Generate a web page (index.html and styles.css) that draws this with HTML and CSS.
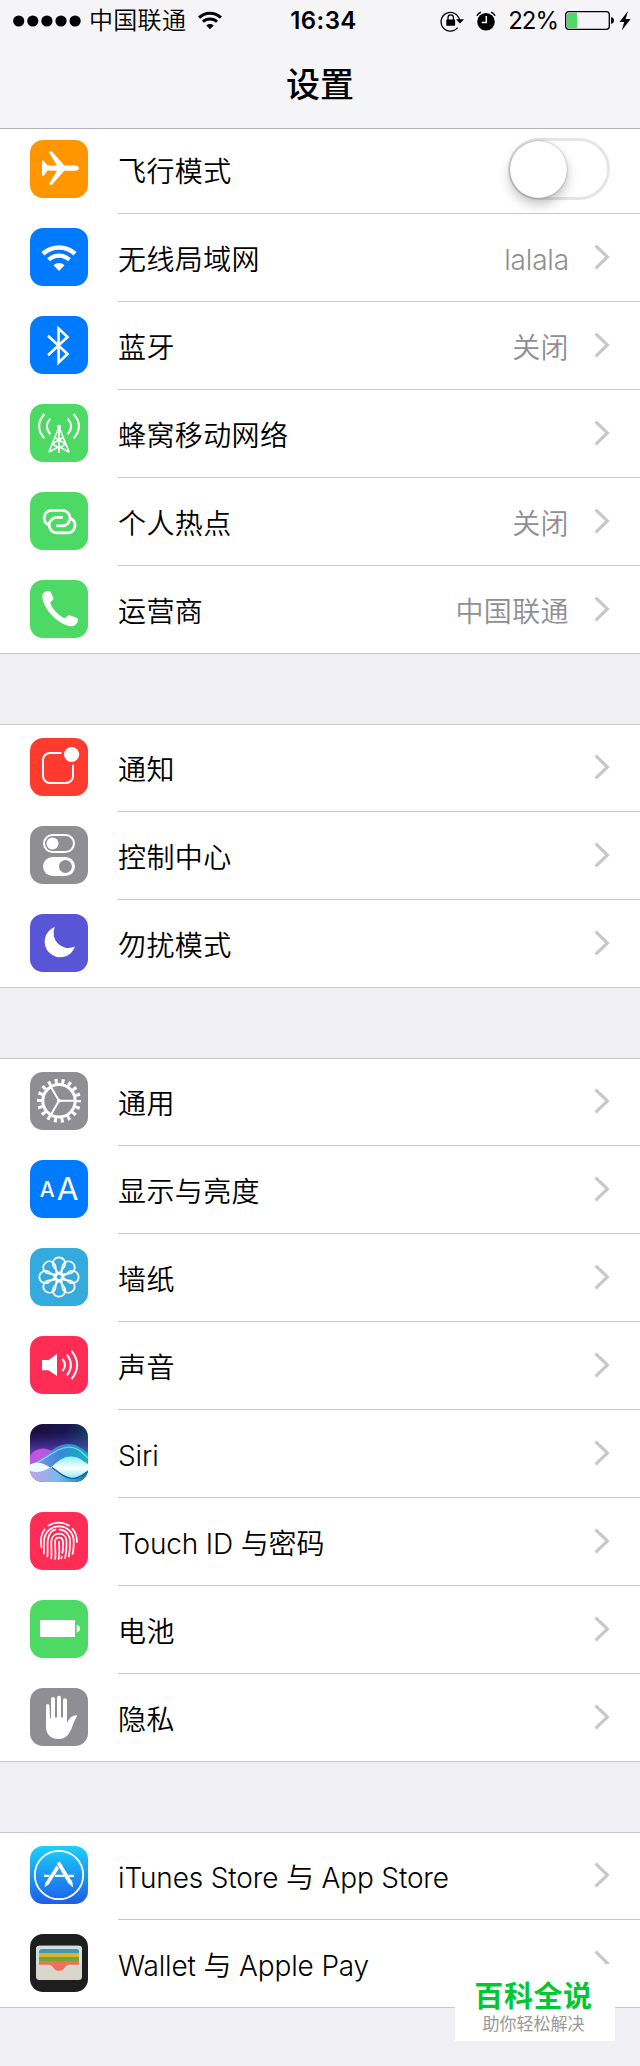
FILE: index.html
```
<!DOCTYPE html>
<html lang="zh-CN">
<head>
    <meta charset="UTF-8">
    <meta name="viewport" content="width=device-width, initial-scale=1.0">
    <title>设置</title>
    <link rel="stylesheet" href="styles.css">
</head>
<body>
    <!-- Formes réutilisées -->
    <svg class="defs" width="0" height="0">
        <symbol id="chevron" viewBox="0 0 16 26">
            <path d="M1.6 1.6 L13.4 13 L1.6 24.4" fill="none" stroke="#c7c7cc" stroke-width="3.2"/>
        </symbol>
        <symbol id="wifi" viewBox="10 16 38 28">
            <g fill="none" stroke="currentColor">
                <path d="M12.9 25.75 A23.6 23.6 0 0 1 45.1 25.75" stroke-width="4.5"/>
                <path d="M18.6 31.8 A15.3 15.3 0 0 1 39.4 31.8" stroke-width="4.2"/>
            </g>
            <path d="M29 43 L23.5 37.2 A8 8 0 0 1 34.5 37.2 Z" fill="currentColor"/>
        </symbol>
    </svg>

    <!-- En-tête -->
    <header class="header">
        <div class="status-bar">
            <div class="status-left">
                <svg class="signal" viewBox="0 0 68 12">
                    <circle cx="5.7" cy="6" r="5.6"/><circle cx="19.8" cy="6" r="5.6"/><circle cx="33.9" cy="6" r="5.6"/><circle cx="48" cy="6" r="5.6"/><circle cx="62.1" cy="6" r="5.6"/>
                </svg>
                <span class="carrier">中国联通</span>
                <svg class="status-wifi"><use href="#wifi"/></svg>
            </div>
            <span class="time">16:34</span>
            <div class="status-right">
                <svg class="lock" viewBox="0 0 24 22">
                    <path d="M17.6 17.6 A9.3 9.3 0 1 1 19.6 10.5" fill="none" stroke="#000" stroke-width="1.3"/>
                    <path d="M16 9.2 H24 L20 13.6 Z"/>
                    <rect x="6.3" y="9.4" width="8.8" height="6.4" rx=".6"/>
                    <path d="M8 10 V7.6 a2.7 2.7 0 0 1 5.4 0 V10" fill="none" stroke="#000" stroke-width="1.3"/>
                </svg>
                <svg class="alarm" viewBox="0 0 20 20">
                    <circle cx="10" cy="10.8" r="8.8"/>
                    <path d="M10.3 5 V11.4 H5.8" fill="none" stroke="#fff" stroke-width="1.5"/>
                    <path d="M1 4.8 Q2 2 5 1.3 M15 1.3 Q18 2 19 4.8" fill="none" stroke="#000" stroke-width="1.5"/>
                </svg>
                <span class="percent">22%</span>
                <svg class="battery" viewBox="0 0 49 19">
                    <rect x=".7" y=".7" width="43.6" height="17.6" rx="3" fill="none" stroke="#000" stroke-width="1.3"/>
                    <path d="M3.5 2.1 H12 V16.9 H3.5 Q2 16.9 2 15.4 V3.6 Q2 2.1 3.5 2.1Z" fill="#4cd964"/>
                    <path d="M46 6.2 Q49 6.5 49 9.5 Q49 12.5 46 12.8Z"/>
                </svg>
                <svg class="bolt" viewBox="0 0 12 20"><path d="M9 0 L.5 11 H5.2 L2.8 19.5 L11.6 8 H6.6 Z"/></svg>
            </div>
        </div>
        <h1 class="title">设置</h1>
    </header>

    <main>
        <!-- Réseau -->
        <section class="group first">
            <div class="row">
                <svg class="icon orange" viewBox="0 0 58 58">
                    <path fill="#fff" d="M12 20.7 H13.8 L17.6 25.6 L27 25.5 L19 12.5 Q19.3 11.2 21.8 11.2 L34.3 25.5 H45.5 Q49 26 49 28.1 Q49 30.2 45.5 30.7 H34.3 L21.8 45 Q19.3 45 19 43.7 L27 30.7 L17.6 30.6 L13.8 35.7 H12 Z"/>
                </svg>
                <div class="cell"><span class="label">飞行模式</span><span class="switch"></span></div>
            </div>
            <div class="row">
                <svg class="icon blue" viewBox="0 0 58 58"><use href="#wifi" x="10" y="16" width="38" height="28"/></svg>
                <div class="cell"><span class="label">无线局域网</span><span class="value latin">lalala</span><svg class="chevron"><use href="#chevron"/></svg></div>
            </div>
            <div class="row">
                <svg class="icon blue" viewBox="0 0 58 58">
                    <path class="line" stroke-width="2.6" d="M18 19.8 L37.5 38 L28.6 46.4 V12.6 L37.5 21 L18 39.2"/>
                </svg>
                <div class="cell"><span class="label">蓝牙</span><span class="value">关闭</span><svg class="chevron"><use href="#chevron"/></svg></div>
            </div>
            <div class="row">
                <svg class="icon green" viewBox="0 0 58 58">
                    <circle cx="29" cy="23" r="2.2" fill="#fff"/>
                    <g class="line" stroke-width="1.6">
                        <path d="M29 23 L18.8 48.3 M29 23 L39.2 48.3 M29 23 V49 M25 33.5 L35.7 40 M33 33.5 L22.3 40 M22.3 40 L29 44 L35.7 40 M18.8 48.3 L29 42.5 L39.2 48.3"/>
                        <path stroke-width="2.1" d="M20.3 14.6 Q13.3 22.3 20.3 30.2 M37.7 14.6 Q44.7 22.3 37.7 30.2 M14.4 10 Q3.7 22.3 14.4 34.4 M43.6 10 Q54.3 22.3 43.6 34.4"/>
                    </g>
                </svg>
                <div class="cell"><span class="label">蜂窝移动网络</span><svg class="chevron"><use href="#chevron"/></svg></div>
            </div>
            <div class="row">
                <svg class="icon green" viewBox="0 0 58 58">
                    <g class="line" stroke-width="2.8">
                        <path id="link" d="M18.3 32.7 A7.6 7.6 0 0 1 21 18.4 H32.4 A7.7 7.7 0 0 1 32.4 33.8 H26.3"/>
                        <use href="#link" transform="rotate(180 29.6 29.6)"/>
                    </g>
                </svg>
                <div class="cell"><span class="label">个人热点</span><span class="value">关闭</span><svg class="chevron"><use href="#chevron"/></svg></div>
            </div>
            <div class="row">
                <svg class="icon green" viewBox="0 0 58 58">
                    <path fill="#fff" d="M12.3 16 C12.3 13 16 10.6 19 11 C20.5 11.2 21.8 14 23.4 18 C24.2 20.5 20 21 20.5 23.5 C22 28.5 29 35.5 33.5 38 C35.8 39 37 34.8 39.5 35.3 C42 36 46.5 37.5 47.8 38.9 C48.5 41 46.5 45 43.5 46 C38 47.5 28 42 21.5 35 C16 29 12.1 21 12.3 16Z"/>
                </svg>
                <div class="cell"><span class="label">运营商</span><span class="value">中国联通</span><svg class="chevron"><use href="#chevron"/></svg></div>
            </div>
        </section>

        <!-- Notifications -->
        <section class="group">
            <div class="row">
                <svg class="icon red" viewBox="0 0 58 58">
                    <path class="line" stroke-width="2" d="M31.5 15 H20 a7 7 0 0 0 -7 7 V38 a7 7 0 0 0 7 7 H36 a7 7 0 0 0 7 -7 V26.8"/>
                    <circle cx="41.6" cy="16.5" r="7.6" fill="#fff"/>
                </svg>
                <div class="cell"><span class="label">通知</span><svg class="chevron"><use href="#chevron"/></svg></div>
            </div>
            <div class="row">
                <svg class="icon gray" viewBox="0 0 58 58">
                    <rect class="line" x="14" y="9" width="30" height="17" rx="8.5" stroke-width="2"/>
                    <circle cx="22.5" cy="17.5" r="6" fill="#fff"/>
                    <rect x="13" y="31" width="32" height="19" rx="9.5" fill="#fff"/>
                    <circle cx="35.4" cy="40.5" r="6.5" fill="#8e8e93"/>
                </svg>
                <div class="cell"><span class="label">控制中心</span><svg class="chevron"><use href="#chevron"/></svg></div>
            </div>
            <div class="row">
                <svg class="icon purple" viewBox="0 0 58 58">
                    <path fill="#fff" d="M24.8 13 A15.6 15.6 0 1 0 45 32.6 A15 15 0 0 1 24.8 13Z"/>
                </svg>
                <div class="cell"><span class="label">勿扰模式</span><svg class="chevron"><use href="#chevron"/></svg></div>
            </div>
        </section>

        <!-- Général -->
        <section class="group">
            <div class="row">
                <svg class="icon gray" viewBox="0 0 58 58">
                    <g class="line">
                        <circle cx="29" cy="28.8" r="16.2" stroke-width="3"/>
                        <circle cx="29" cy="28.8" r="19.5" stroke-width="5" stroke-dasharray="3 3.807" stroke-dashoffset="1.5"/>
                        <path stroke-width="2" d="M29 28.8 H45 M29 28.8 L21 15 M29 28.8 L21 42.6"/>
                    </g>
                    <circle cx="29" cy="28.8" r="1.8" fill="#fff"/>
                </svg>
                <div class="cell"><span class="label">通用</span><svg class="chevron"><use href="#chevron"/></svg></div>
            </div>
            <div class="row">
                <svg class="icon blue" viewBox="0 0 58 58">
                    <text class="glyph" x="9.8" y="37" font-size="21" font-weight="500">A</text>
                    <text class="glyph" x="26.8" y="40" font-size="31.5">A</text>
                </svg>
                <div class="cell"><span class="label">显示与亮度</span><svg class="chevron"><use href="#chevron"/></svg></div>
            </div>
            <div class="row">
                <svg class="icon sky" viewBox="0 0 58 58">
                    <g class="line" stroke-width="1.7">
                        <circle cx="29" cy="29" r="3.3"/>
                        <path id="petal" d="M29 25.7 L23.6 18.6 A6.2 6.2 0 1 1 34.4 18.6 Z"/>
                        <use href="#petal" transform="rotate(45 29 29)"/>
                        <use href="#petal" transform="rotate(90 29 29)"/>
                        <use href="#petal" transform="rotate(135 29 29)"/>
                        <use href="#petal" transform="rotate(180 29 29)"/>
                        <use href="#petal" transform="rotate(225 29 29)"/>
                        <use href="#petal" transform="rotate(270 29 29)"/>
                        <use href="#petal" transform="rotate(315 29 29)"/>
                    </g>
                </svg>
                <div class="cell"><span class="label">墙纸</span><svg class="chevron"><use href="#chevron"/></svg></div>
            </div>
            <div class="row">
                <svg class="icon pink" viewBox="0 0 58 58">
                    <path fill="#fff" d="M12 24 H18.5 L27 18 V40 L18.5 34.2 H12 Z"/>
                    <path class="line" stroke-width="2" d="M32.5 23 Q37.5 29 32.5 35 M37 18.6 Q44.8 29 37 39.4 M41.5 14.8 Q52.8 29 41.5 43.2"/>
                </svg>
                <div class="cell"><span class="label">声音</span><svg class="chevron"><use href="#chevron"/></svg></div>
            </div>
            <div class="row">
                <svg class="icon" viewBox="0 0 58 58">
                    <defs>
                        <linearGradient id="siri-bg" x1="0" y1="0" x2="1" y2="0.5">
                            <stop offset="0" stop-color="#1c0b3c"/><stop offset=".55" stop-color="#1a1650"/><stop offset="1" stop-color="#0b4f6c"/>
                        </linearGradient>
                        <linearGradient id="siri-pink" x1="0" y1="0" x2="1" y2="1">
                            <stop offset="0" stop-color="#d048dc"/><stop offset="1" stop-color="#8d7be6"/>
                        </linearGradient>
                        <linearGradient id="siri-blue" x1="0" y1="0" x2="1" y2="0">
                            <stop offset="0" stop-color="#8f9ae8"/><stop offset=".5" stop-color="#3b86dc"/><stop offset="1" stop-color="#0fb5b8"/>
                        </linearGradient>
                        <linearGradient id="siri-low" x1="0" y1="0" x2="1" y2="0">
                            <stop offset="0" stop-color="#c0a5ea"/><stop offset=".5" stop-color="#79b8ee"/><stop offset="1" stop-color="#067ba5"/>
                        </linearGradient>
                        <linearGradient id="siri-eye" x1="0" y1="0" x2="0" y2="1">
                            <stop offset="0" stop-color="#8beef2"/><stop offset=".55" stop-color="#fff"/><stop offset="1" stop-color="#8fe9f4"/>
                        </linearGradient>
                        <linearGradient id="siri-glow" x1="0" y1="0" x2="0" y2="1">
                            <stop offset="0" stop-color="#4a35b0" stop-opacity="0"/><stop offset="1" stop-color="#6b50d0" stop-opacity=".8"/>
                        </linearGradient>
                    </defs>
                    <rect width="58" height="58" fill="url(#siri-bg)"/>
                    <rect y="8" width="58" height="22" fill="url(#siri-glow)"/>
                    <path d="M0 31 Q12 18 28 31 L36 44 H0Z" fill="url(#siri-pink)"/>
                    <path d="M0 41 C16 36 22 20 39 20 C48 20 53 26 58 29 V46 H0Z" fill="url(#siri-blue)"/>
                    <path d="M0 41 C16 37 24 24 39 23 C48 23 53 30 58 34" fill="none" stroke="#8bf2f3" stroke-width="1.2" opacity=".75"/>
                    <path d="M0 43 H58 V58 H0Z" fill="url(#siri-low)"/>
                    <path d="M20 43.5 Q10 36 0 40.5 V47 Q10 50 20 43.5Z" fill="#effcff"/>
                    <path d="M21 43.5 C30 35 35 32 42 32.5 C50 33 54 38 58 40 V47 C53 51 49 54.5 42 54 C34 53.5 29 48 21 43.5Z" fill="url(#siri-eye)"/>
                    <path d="M22 43.5 C30 49 34 54 42 54.5 C50 54.5 54 50 58 47" fill="none" stroke="#075d92" stroke-width="1.2"/>
                </svg>
                <div class="cell"><span class="label latin">Siri</span><svg class="chevron"><use href="#chevron"/></svg></div>
            </div>
            <div class="row">
                <svg class="icon pink" viewBox="0 0 58 58">
                    <g class="line" stroke-width="1.7" stroke-linecap="round">
                        <path d="M18.5 13.5 Q28.5 7.8 39 13.5 M42.5 16.8 Q47 22 47 30 M14.6 17.5 Q9.5 23.5 11.5 35.5"/>
                        <path d="M14 41.5 C13.8 38 13.8 33 14.1 29 C14.8 9.5 43.3 9.5 43.7 29 C43.8 34 43.6 38.5 42.5 42"/>
                        <path d="M17.4 44.5 C18 39 17.3 33 17.7 29 C18.3 21 22.5 18 25.4 17.6 M29.5 17.6 C36 18 40 23 40.1 29 C40.2 35 39.8 40 38.8 44.5"/>
                        <path d="M21.3 46.3 C22 40 21 34 21.4 29 C22.2 19.3 36 19.3 36.5 29 C36.7 36 36.2 41.5 35 46"/>
                        <path d="M25.2 47 C26 41 24.8 35 25.1 29.3 C25.5 24.5 32.5 24.5 32.9 29.3 C33.2 34 33 38.5 32.4 41 M31.7 44.5 L31.4 46.5"/>
                        <path d="M28.7 47 C29.7 40 29.4 34 29 29.5"/>
                    </g>
                </svg>
                <div class="cell"><span class="label latin">Touch ID 与密码</span><svg class="chevron"><use href="#chevron"/></svg></div>
            </div>
            <div class="row">
                <svg class="icon green" viewBox="0 0 58 58">
                    <rect x="10" y="20" width="35" height="17" fill="#fff"/>
                    <path fill="#fff" d="M46.7 24.8 Q50 25.5 50 28.6 Q50 31.7 46.7 32.4Z"/>
                </svg>
                <div class="cell"><span class="label">电池</span><svg class="chevron"><use href="#chevron"/></svg></div>
            </div>
            <div class="row">
                <svg class="icon gray" viewBox="0 0 58 58">
                    <path fill="#fff" d="M16 17.8 a1.7 1.7 0 0 1 3.4 0 L20 30 H21 V11 a2 2 0 0 1 4 0 V29.5 H27 V9.8 a2 2 0 0 1 4 0 V29.5 H33 V12.3 a2 2 0 0 1 4 0 V34.5 C39.5 31 40.5 27.2 47 27.2 Q47.4 28.2 46 30 C43 34.5 42.5 40 39.5 44.5 C37 49 33.5 51 28.5 51 C21 51 16 46.5 16 39Z"/>
                </svg>
                <div class="cell"><span class="label">隐私</span><svg class="chevron"><use href="#chevron"/></svg></div>
            </div>
        </section>

        <!-- Boutiques -->
        <section class="group">
            <div class="row">
                <svg class="icon store" viewBox="0 0 58 58">
                    <circle class="line" cx="29" cy="29" r="24.2" stroke-width="1.8"/>
                    <g class="line">
                        <path stroke-width="2.2" d="M14 29.8 H19.5 M25 29.8 H34 M38.5 29.8 H44"/>
                        <path stroke-width="4" d="M28.2 16.5 L40.2 36.5"/>
                        <path stroke-width="3.6" d="M28 20.5 L17.2 37.5"/>
                    </g>
                    <path fill="#fff" d="M37.8 36.8 L42 34.3 L43.2 41.5 Z M15.5 36 L18.8 38.2 L14.6 41.5Z"/>
                    <path d="M27 19 L30.5 24.5" stroke="#2aa0f5" stroke-width=".8"/>
                </svg>
                <div class="cell"><span class="label latin">iTunes Store 与 App Store</span><svg class="chevron"><use href="#chevron"/></svg></div>
            </div>
            <div class="row">
                <svg class="icon black" viewBox="0 0 58 58">
                    <rect x="6" y="11.8" width="46" height="34.2" rx="3.5" fill="#d9d7cc"/>
                    <path fill="#d0dfe0" d="M6 30 V15.3 Q6 11.8 9.5 11.8 H48.5 Q52 11.8 52 15.3 V30Z"/>
                    <path fill="#4796b0" d="M9 19.2 V17.5 Q9 15 11.5 15 H46.5 Q49 15 49 17.5 V19.2Z"/>
                    <rect x="9" y="19" width="40" height="4.3" fill="#dfb22b"/>
                    <rect x="9" y="23" width="40" height="4.3" fill="#69aa38"/>
                    <path fill="#f0705c" d="M9 27 H49 V30.7 H39.5 C36.5 30.7 36 32 34.5 34 C32 37.8 26 37.8 23.5 34 C22 32 21.5 30.7 18.5 30.7 H9Z"/>
                    <path fill="#d9d7cc" d="M6 30.7 H9 V34 H6Z M49 30.7 H52 V34 H49Z"/>
                </svg>
                <div class="cell"><span class="label latin">Wallet 与 Apple Pay</span><svg class="chevron"><use href="#chevron"/></svg></div>
            </div>
        </section>
    </main>

    <!-- Filigrane -->
    <div class="watermark">
        <strong>百科全说</strong>
        <span>助你轻松解决</span>
    </div>
</body>
</html>
```
FILE: styles.css
```
/* Reset de base */
* {
    margin: 0;
    padding: 0;
    box-sizing: border-box;
}

body {
    position: relative;
    min-height: 2066px;
    background-color: #efeff4;
    color: #000;
    font-family: Inter, "Noto Sans CJK SC", sans-serif;
    overflow-x: hidden;
}

.defs {
    display: block;
}

/* En-tête : recouvre légèrement la première ligne */
.header {
    position: relative;
    z-index: 1;
    height: 129px;
    margin-bottom: -3px;
    background: #f5f5f7;
    border-bottom: 1px solid #b2b2b5;
}

.status-bar {
    display: grid;
    grid-template-columns: 1fr auto 1fr;
    align-items: center;
    height: 41px;
    padding: 0 9px 0 13px;
}

.status-left,
.status-right {
    display: flex;
    align-items: center;
}

.status-right {
    justify-content: flex-end;
}

.signal {
    width: 68px;
    height: 12px;
}

.carrier {
    margin-left: 8px;
    font-size: 24px;
    font-weight: 350;
    line-height: 40px;
    letter-spacing: 0.3px;
}

.status-wifi {
    width: 26px;
    height: 19px;
    margin-left: 11px;
}

.time {
    font-size: 24px;
    font-weight: 600;
    letter-spacing: 0.4px;
    padding-left: 3px;
}

.lock {
    width: 24px;
    height: 22px;
}

.alarm {
    width: 20px;
    height: 20px;
    margin-left: 12px;
}

.percent {
    margin-left: 12px;
    font-size: 24px;
    letter-spacing: -1px;
}

.battery {
    width: 49px;
    height: 19px;
    margin-left: 7px;
}

.bolt {
    width: 12px;
    height: 20px;
    margin-left: 5px;
}

.title {
    font-size: 34px;
    font-weight: 500;
    line-height: 48px;
    text-align: center;
    margin-top: 20px;
}

/* Groupes de réglages */
.group {
    margin-top: 70px;
    background: #fff;
    box-shadow: inset 0 1px #c8c7cc;
}

.group.first {
    margin-top: 0;
}

.row {
    display: flex;
    height: 88px;
    padding-left: 30px;
}

.group .row:last-child {
    border-bottom: 1px solid #c8c7cc;
}

.icon {
    flex-shrink: 0;
    width: 58px;
    height: 58px;
    margin: 14px 30px 0 0;
    border-radius: 13px;
    overflow: hidden;
    color: #fff;
}

.cell {
    flex: 1;
    display: flex;
    align-items: center;
    padding-right: 30px;
    border-bottom: 1px solid #c8c7cc;
}

.row:last-child .cell {
    border-bottom: none;
}

.label,
.value {
    font-size: 28px;
    font-weight: 350;
    line-height: 40px;
    letter-spacing: 0.4px;
    white-space: nowrap;
    padding-top: 4px;
}

.label {
    flex: 1;
}

.value {
    color: #8e8e93;
    margin-right: 25px;
}

.label.latin,
.value.latin {
    letter-spacing: -0.15px;
}

.chevron {
    width: 16px;
    height: 26px;
    margin-top: -1px;
}

/* Interrupteur */
.switch {
    width: 102px;
    height: 62px;
    margin-top: -1px;
    border: 3px solid #e5e5e5;
    border-radius: 31px;
}

.switch::before {
    content: "";
    display: block;
    width: 57px;
    height: 57px;
    margin-left: -1px;
    border-radius: 50%;
    background: #fff;
    box-shadow: 0 0 2px rgba(0, 0, 0, 0.4), 0 6px 12px rgba(0, 0, 0, 0.25);
}

/* Icônes */
.line {
    fill: none;
    stroke: #fff;
}

.glyph {
    fill: #fff;
    font-family: Inter, sans-serif;
}

.orange { background: #ff9500; }
.blue { background: #007aff; }
.green { background: #4cd964; }
.red { background: #ff3b30; }
.gray { background: #8e8e93; }
.purple { background: #5856d6; }
.sky { background: #35aadc; }
.pink { background: #ff2d55; }
.black { background: #1e1e1f; }
.store { background: linear-gradient(#1bd0fb, #1f5de8); }

/* Filigrane */
.watermark {
    position: absolute;
    z-index: 2;
    left: 455px;
    top: 1964px;
    width: 160px;
    height: 77px;
    padding: 15px 3px 0 0;
    background: #fff;
    text-align: center;
}

.watermark strong {
    display: block;
    color: #00c832;
    font-size: 29px;
    font-weight: 700;
    line-height: 35px;
    letter-spacing: 0.6px;
}

.watermark span {
    display: block;
    color: #999;
    font-size: 17px;
    line-height: 20px;
}
```
